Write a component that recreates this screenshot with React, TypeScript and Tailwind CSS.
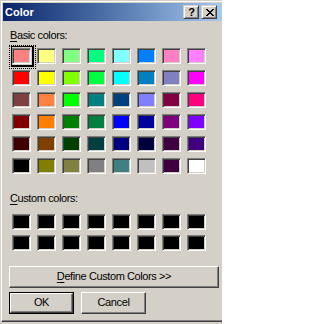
import React from "react";

const basic: string[] = [
  "#FF8080", "#FFFF80", "#80FF80", "#00FF80", "#80FFFF", "#0080FF", "#FF80C0", "#FF80FF",
  "#FF0000", "#FFFF00", "#80FF00", "#00FF40", "#00FFFF", "#0080C0", "#8080C0", "#FF00FF",
  "#804040", "#FF8040", "#00FF00", "#008080", "#004080", "#8080FF", "#800040", "#FF0080",
  "#800000", "#FF8000", "#008000", "#008040", "#0000FF", "#0000A0", "#800080", "#8000FF",
  "#400000", "#804000", "#004000", "#004040", "#000080", "#000040", "#400040", "#400080",
  "#000000", "#808000", "#808040", "#808080", "#408080", "#C0C0C0", "#400040", "#FFFFFF",
];

const custom: string[] = Array.from({ length: 16 }, () => "#000000");

function Swatch({ color }: { color: string }) {
  return (
    <div
      className="h-[16px] w-[19px] border border-t-[#808080] border-l-[#808080] border-r-white border-b-white shadow-[inset_1px_1px_0_#404040,inset_-1px_-1px_0_#d4d0c8]"
      style={{ backgroundColor: color }}
    />
  );
}

function CloseGlyph() {
  return (
    <svg width="8" height="7" viewBox="0 0 8 7" shapeRendering="crispEdges">
      <path
        fill="#000"
        d="M0 0h2v1H0zM6 0h2v1H6zM1 1h2v1H1zM5 1h2v1H5zM2 2h4v1H2zM3 3h2v1H3zM2 4h4v1H2zM1 5h2v1H1zM5 5h2v1H5zM0 6h2v1H0zM6 6h2v1H6z"
      />
    </svg>
  );
}

export default function App() {
  return (
    <div className="h-[324px] w-[222px] overflow-hidden bg-[#d4d0c8] pl-[1px] pt-[1px] pb-[2px] font-['Liberation_Sans',sans-serif] text-[11px] text-black flex flex-col">
      <div className="flex flex-1 flex-col border-t border-l border-b border-t-white border-l-white border-b-[#404040]">
        <div className="flex flex-1 flex-col pl-[1px] pt-[1px] border-b border-b-[#808080]">
          {/* Title bar */}
          <div className="flex h-[18px] items-center justify-between bg-gradient-to-r from-[#0a246a] to-[#a6caf0] pl-[2px] pr-[5px]">
            <span className="font-bold text-white text-[11px] leading-[13px]">Color</span>
            <div className="flex gap-[2px]">
              <div className="flex h-[14px] w-[16px] items-center justify-center border border-t-[#d4d0c8] border-l-[#d4d0c8] border-r-[#404040] border-b-[#404040] bg-[#d4d0c8] shadow-[inset_1px_1px_0_#ffffff,inset_-1px_-1px_0_#808080]">
                <span className="font-bold text-[11px] leading-[11px] pl-[1px]">?</span>
              </div>
              <div className="flex h-[14px] w-[16px] items-center justify-center border border-t-[#d4d0c8] border-l-[#d4d0c8] border-r-[#404040] border-b-[#404040] bg-[#d4d0c8] shadow-[inset_1px_1px_0_#ffffff,inset_-1px_-1px_0_#808080] pl-[1px]">
                <CloseGlyph />
              </div>
            </div>
          </div>

          {/* Body */}
          <div className="flex flex-col pl-[6px]">
            <div className="mt-[8px] ml-[1px] h-[13px] leading-[13px] tracking-[-0.4px]">
              <span className="underline underline-offset-[2px]">B</span>asic colors:
            </div>

            <div className="mt-[6px] ml-[3px] grid grid-cols-[repeat(8,19px)] gap-x-[6px] gap-y-[6px]">
              {basic.map((c, i) =>
                i === 0 ? (
                  <div key={i} className="relative">
                    <Swatch color={c} />
                    <div className="pointer-events-none absolute left-[-1px] top-[-2px] h-[21px] w-[23px] border-t border-l border-r-2 border-b-2 border-black" />
                    <div className="pointer-events-none absolute left-[-3px] top-[-3px] h-[24px] w-[27px] border border-dotted border-black" />
                  </div>
                ) : (
                  <Swatch key={i} color={c} />
                )
              )}
            </div>

            <div className="mt-[18px] ml-[1px] h-[13px] leading-[13px] tracking-[-0.4px]">
              <span className="underline underline-offset-[2px]">C</span>ustom colors:
            </div>

            <div className="mt-[9px] ml-[3px] grid grid-cols-[repeat(8,19px)] gap-x-[6px] gap-y-[5px]">
              {custom.map((c, i) => (
                <Swatch key={i} color={c} />
              ))}
            </div>

            <div className="mt-[15px] flex h-[22px] w-[210px] items-center justify-center border border-t-white border-l-white border-r-[#404040] border-b-[#404040] shadow-[inset_-1px_-1px_0_#808080] pb-[1px] leading-[13px] tracking-[-0.4px]">
              <span>
                <span className="underline underline-offset-[2px]">D</span>efine Custom Colors &gt;&gt;
              </span>
            </div>

            <div className="mt-[4px] flex gap-[7px]">
              <div className="h-[22px] w-[65px] border border-black">
                <div className="flex h-full w-full items-center justify-center border border-t-white border-l-white border-r-[#404040] border-b-[#404040] shadow-[inset_-1px_-1px_0_#808080] pb-[1px] leading-[13px] tracking-[-0.4px]">
                  OK
                </div>
              </div>
              <div className="flex h-[22px] w-[65px] items-center justify-center border border-t-white border-l-white border-r-[#404040] border-b-[#404040] shadow-[inset_-1px_-1px_0_#808080] pb-[1px] leading-[13px] tracking-[-0.4px]">
                Cancel
              </div>
            </div>
          </div>
        </div>
      </div>
    </div>
  );
}
